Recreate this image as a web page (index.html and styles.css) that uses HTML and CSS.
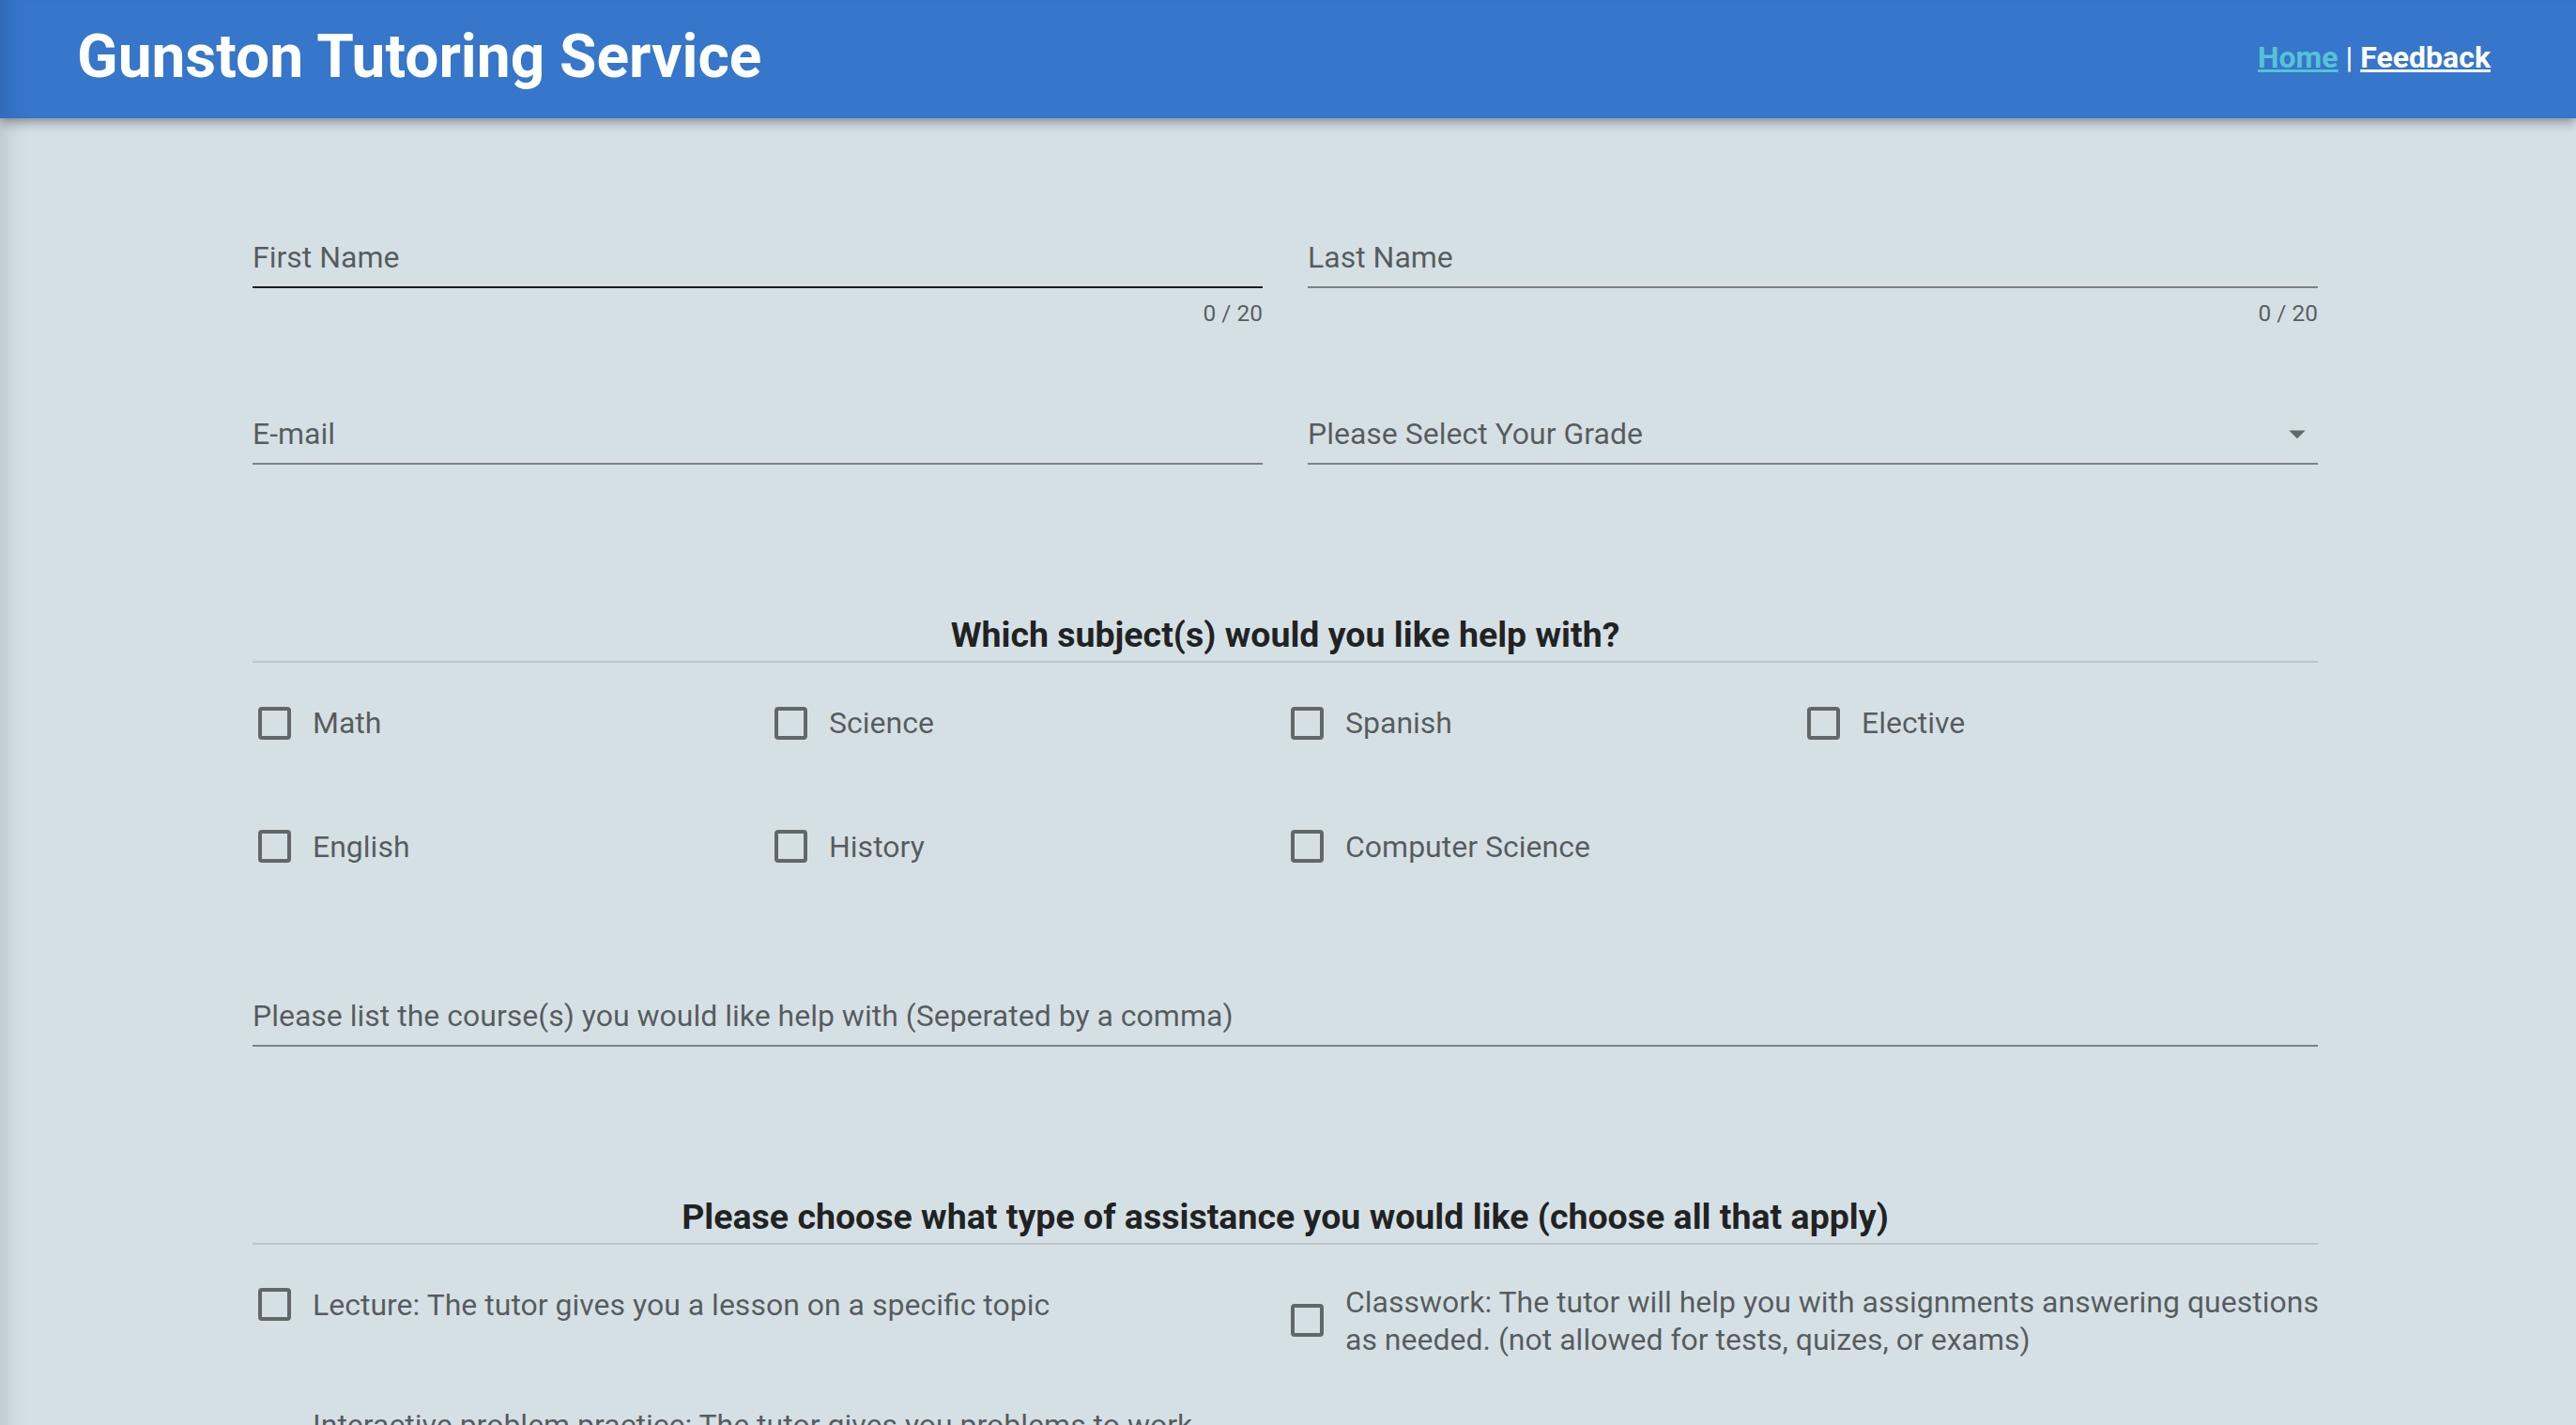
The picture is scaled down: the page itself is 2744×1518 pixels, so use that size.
FILE: index.html
```html
<!DOCTYPE html>
<html lang="en">
<head>
<meta charset="utf-8">
<title>Gunston Tutoring Service</title>
<link rel="stylesheet" href="styles.css">
</head>
<body>
<header class="topbar">
  <h1 class="brand">Gunston Tutoring Service</h1>
  <nav class="nav">
    <a class="nav-link nav-link--current" href="#">Home</a> <span class="nav-sep">|</span> <a class="nav-link" href="#">Feedback</a>
  </nav>
</header>
<main class="content">
  <form class="form">
    <div class="field-grid">
      <div class="field">
        <div class="field-control field-control--hover"><span class="field-label">First Name</span></div>
        <div class="field-details"><span class="counter">0 / 20</span></div>
      </div>
      <div class="field">
        <div class="field-control"><span class="field-label">Last Name</span></div>
        <div class="field-details"><span class="counter">0 / 20</span></div>
      </div>
      <div class="field">
        <div class="field-control"><span class="field-label">E-mail</span></div>
      </div>
      <div class="field">
        <div class="field-control">
          <span class="field-label">Please Select Your Grade</span>
          <svg class="select-icon" viewBox="0 0 24 24" aria-hidden="true"><path d="M7 10l5 5 5-5z"/></svg>
        </div>
      </div>
    </div>

    <h2 class="section-title">Which subject(s) would you like help with?</h2>
    <div class="subject-grid">
      <label class="check"><span class="check-box"></span><span class="check-label">Math</span></label>
      <label class="check"><span class="check-box"></span><span class="check-label">Science</span></label>
      <label class="check"><span class="check-box"></span><span class="check-label">Spanish</span></label>
      <label class="check"><span class="check-box"></span><span class="check-label">Elective</span></label>
      <label class="check"><span class="check-box"></span><span class="check-label">English</span></label>
      <label class="check"><span class="check-box"></span><span class="check-label">History</span></label>
      <label class="check"><span class="check-box"></span><span class="check-label">Computer Science</span></label>
    </div>

    <div class="field field--course">
      <div class="field-control"><span class="field-label">Please list the course(s) you would like help with (Seperated by a comma)</span></div>
    </div>

    <h2 class="section-title">Please choose what type of assistance you would like (choose all that apply)</h2>
    <div class="assist-grid">
      <label class="check"><span class="check-box"></span><span class="check-label">Lecture: The tutor gives you a lesson on a specific topic</span></label>
      <label class="check"><span class="check-box"></span><span class="check-label">Classwork: The tutor will help you with assignments answering questions as needed. (not allowed for tests, quizes, or exams)</span></label>
      <label class="check"><span class="check-box"></span><span class="check-label">Interactive problem practice: The tutor gives you problems to work through and checks your answers</span></label>
    </div>
  </form>
</main>
</body>
</html>
```
FILE: styles.css
```css
* {
  box-sizing: border-box;
}

html {
  scrollbar-width: none;
}

body {
  margin: 0;
  font-family: Roboto, "Noto Sans", "Liberation Sans", sans-serif;
  background: #d5e0e5;
  color: rgba(0, 0, 0, 0.87);
}

.topbar {
  position: relative;
  z-index: 1;
  height: 126px;
  display: flex;
  align-items: center;
  justify-content: space-between;
  padding: 0 91px 4px 82px;
  background: #3676cb;
  box-shadow:
    0 3px 7px -2px rgba(0, 0, 0, 0.2),
    0 7px 9px 0 rgba(0, 0, 0, 0.14),
    0 2px 18px 0 rgba(0, 0, 0, 0.12),
    inset 24px 0 24px -18px rgba(0, 0, 0, 0.12);
}

.brand {
  margin: 0;
  font-size: 64px;
  line-height: 1;
  font-weight: 700;
  color: #fff;
}

.nav {
  font-size: 32px;
  font-weight: 700;
  color: #fff;
  white-space: nowrap;
}

.nav-link {
  color: #fff;
  text-decoration: underline;
}

.nav-link--current {
  color: #55c3d5;
}

.nav-sep {
  font-weight: 400;
}

.content {
  min-height: calc(100vh - 126px);
  padding-top: 128px;
  box-shadow: inset 26px 0 26px -20px rgba(0, 0, 0, 0.13);
}

.form {
  width: 2200px;
  margin-left: 269px;
}

.field-grid {
  display: grid;
  grid-template-columns: 1fr 1fr;
  column-gap: 48px;
  row-gap: 94px;
}

.field-control {
  display: flex;
  align-items: center;
  padding-bottom: 11px;
  border-bottom: 2px solid rgba(0, 0, 0, 0.42);
}

.field-control--hover {
  border-bottom-color: rgba(0, 0, 0, 0.87);
}

.field-label {
  flex: 1;
  font-size: 32px;
  line-height: 40px;
  color: rgba(0, 0, 0, 0.6);
}

.field-details {
  margin-top: 13px;
  display: flex;
  justify-content: flex-end;
}

.counter {
  font-size: 24.5px;
  line-height: 28px;
  color: rgba(0, 0, 0, 0.6);
}

.select-icon {
  flex: none;
  width: 42px;
  height: 42px;
  margin: -1px 1px -1px 0;
  fill: rgba(0, 0, 0, 0.54);
}

.section-title {
  margin: 159px 0 0;
  padding-bottom: 6px;
  font-size: 37.5px;
  line-height: 44px;
  font-weight: 700;
  text-align: center;
  color: rgba(0, 0, 0, 0.87);
  border-bottom: 2px solid rgba(0, 0, 0, 0.12);
}

.subject-grid {
  margin-top: 41px;
  display: grid;
  grid-template-columns: repeat(4, 1fr);
  row-gap: 85.5px;
}

.field--course {
  margin-top: 137px;
}

.assist-grid {
  margin-top: 41px;
  display: grid;
  grid-template-columns: 1fr 1fr;
  row-gap: 51.6px;
  align-items: start;
}

.check {
  display: flex;
  align-items: center;
  min-height: 46px;
}

.check-box {
  flex: none;
  width: 35px;
  height: 35px;
  margin-left: 6px;
  border: 4px solid rgba(0, 0, 0, 0.54);
  border-radius: 4px;
}

.check-label {
  margin-left: 23px;
  font-size: 32px;
  line-height: 40px;
  color: rgba(0, 0, 0, 0.6);
}

.assist-grid .check-label {
  margin-right: -14px;
}
```
